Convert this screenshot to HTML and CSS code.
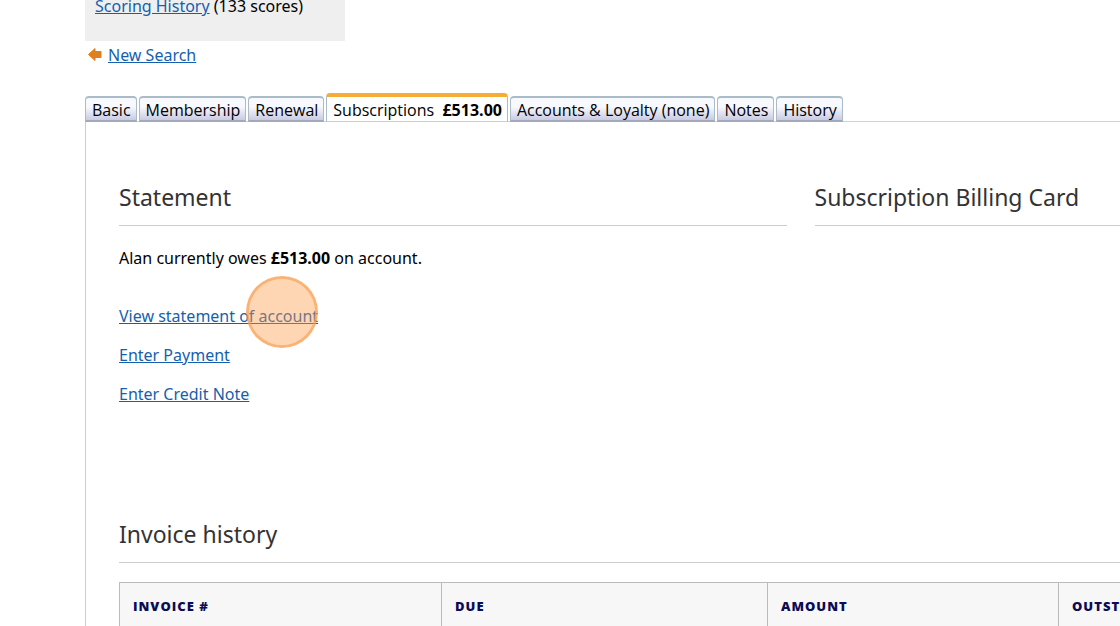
FILE: index.html
```html
<!DOCTYPE html>
<html lang="en">
<head>
    <meta charset="UTF-8">
    <meta name="viewport" content="width=device-width, initial-scale=1.0">
    <title>Member - Subscriptions</title>
    <link rel="stylesheet" href="styles.css">
</head>
<body>
    <main class="page">
        <!-- Member summary -->
        <div class="summary">
            <a href="#scoring">Scoring History</a> (133 scores)
        </div>
        <div class="back">
            <svg width="14" height="14" viewBox="0 0 14 14" aria-hidden="true">
                <path d="M0.5 6.5 L7 0.5 V3.5 H13 V9.5 H7 V12.5 Z" fill="#e07f1f" stroke="#e07f1f" stroke-linejoin="round"/>
            </svg>
            <a href="#search">New Search</a>
        </div>

        <!-- Tabs -->
        <nav class="tabs">
            <button type="button" class="tab">Basic</button>
            <button type="button" class="tab">Membership</button>
            <button type="button" class="tab">Renewal</button>
            <button type="button" class="tab active">Subscriptions&nbsp; <b>£513.00</b></button>
            <button type="button" class="tab">Accounts &amp; Loyalty (none)</button>
            <button type="button" class="tab">Notes</button>
            <button type="button" class="tab">History</button>
        </nav>

        <div class="panel">
            <div class="columns">
                <section class="statement">
                    <h2>Statement</h2>
                    <p>Alan currently owes <b>£513.00</b> on account.</p>
                    <ul class="actions">
                        <li class="current"><a href="#statement">View statement of account</a><span class="click-marker"></span></li>
                        <li><a href="#payment">Enter Payment</a></li>
                        <li><a href="#credit">Enter Credit Note</a></li>
                    </ul>
                </section>
                <section>
                    <h2>Subscription Billing Card</h2>
                </section>
            </div>

            <!-- Invoices -->
            <section>
                <h2>Invoice history</h2>
                <table class="invoices">
                    <thead>
                        <tr>
                            <th class="col-invoice">Invoice #</th>
                            <th class="col-due">Due</th>
                            <th class="col-amount">Amount</th>
                            <th>Outstanding</th>
                        </tr>
                    </thead>
                </table>
            </section>
        </div>
    </main>
</body>
</html>
```
FILE: styles.css
```css
* {
    margin: 0;
    padding: 0;
    box-sizing: border-box;
}

body {
    height: 100vh;
    overflow: hidden;
    font-family: "Noto Sans", "Open Sans", sans-serif;
    font-size: 16px;
    line-height: 24px;
    color: #000;
    background-color: #fff;
}

a {
    color: #155fb0;
}

/* the record is wider than the window */
.page {
    margin-left: 85px;
    margin-right: -396px;
}

.summary {
    width: 260px;
    margin-top: -6px;
    padding: 0 10px 23px;
    background-color: #efefef;
}

.back {
    display: flex;
    align-items: center;
    gap: 6px;
    margin-bottom: 24px;
    padding: 2px 3px;
}

/* Tabs */
.tabs {
    display: flex;
    align-items: flex-end;
    gap: 2px;
}

.tab {
    height: 26px;
    padding: 0 5px 0 6px;
    border: 1px solid #a9bcc8;
    border-top-width: 2px;
    border-bottom: 2px solid #a3a8bd;
    border-radius: 4px 4px 0 0;
    background: linear-gradient(#f8f8ff 40%, #c9cbe2);
    font-family: "Open Sans", sans-serif;
    font-size: 16px;
    line-height: 24px;
    color: #000;
    white-space: nowrap;
    cursor: pointer;
}

.tab.active {
    height: 29px;
    padding-top: 1px;
    border-top: 4px solid #f5ad35;
    border-bottom: 1px solid #ccc;
    background: #fff;
}

.panel {
    padding: 57px 33px;
    border: 1px solid #ccc;
    border-top-color: #d2d2d2;
    margin-top: -1px;
}

.columns {
    display: grid;
    grid-template-columns: 1fr 1fr;
    gap: 28px;
    margin-bottom: 95px;
}

h2 {
    padding-bottom: 10px;
    border-bottom: 1px solid #ccc;
    font-size: 23px;
    font-weight: 400;
    line-height: 36px;
    color: #333;
}

.statement p {
    margin-top: 20px;
}

.actions {
    margin-top: 34px;
    list-style: none;
}

.actions li {
    margin-bottom: 15px;
}

.current {
    position: relative;
}

.click-marker {
    position: absolute;
    top: -28px;
    left: 127px;
    width: 72px;
    height: 72px;
    border: 3px solid rgba(248, 153, 70, 0.75);
    border-radius: 50%;
    background-color: rgba(255, 152, 67, 0.4);
    background-clip: padding-box;
}

/* Invoice table */
.invoices {
    width: 100%;
    margin-top: 19px;
    border-collapse: collapse;
    table-layout: fixed;
}

.invoices th {
    padding: 11px 13px 13px;
    border: 1px solid #bbb;
    background-color: #f7f7f7;
    font-family: "Open Sans", sans-serif;
    font-size: 13px;
    font-weight: 800;
    letter-spacing: 1px;
    text-align: left;
    text-transform: uppercase;
    color: #0c0c54;
}

.col-invoice {
    width: 322px;
}

.col-due {
    width: 326px;
}

.col-amount {
    width: 291px;
}
```
